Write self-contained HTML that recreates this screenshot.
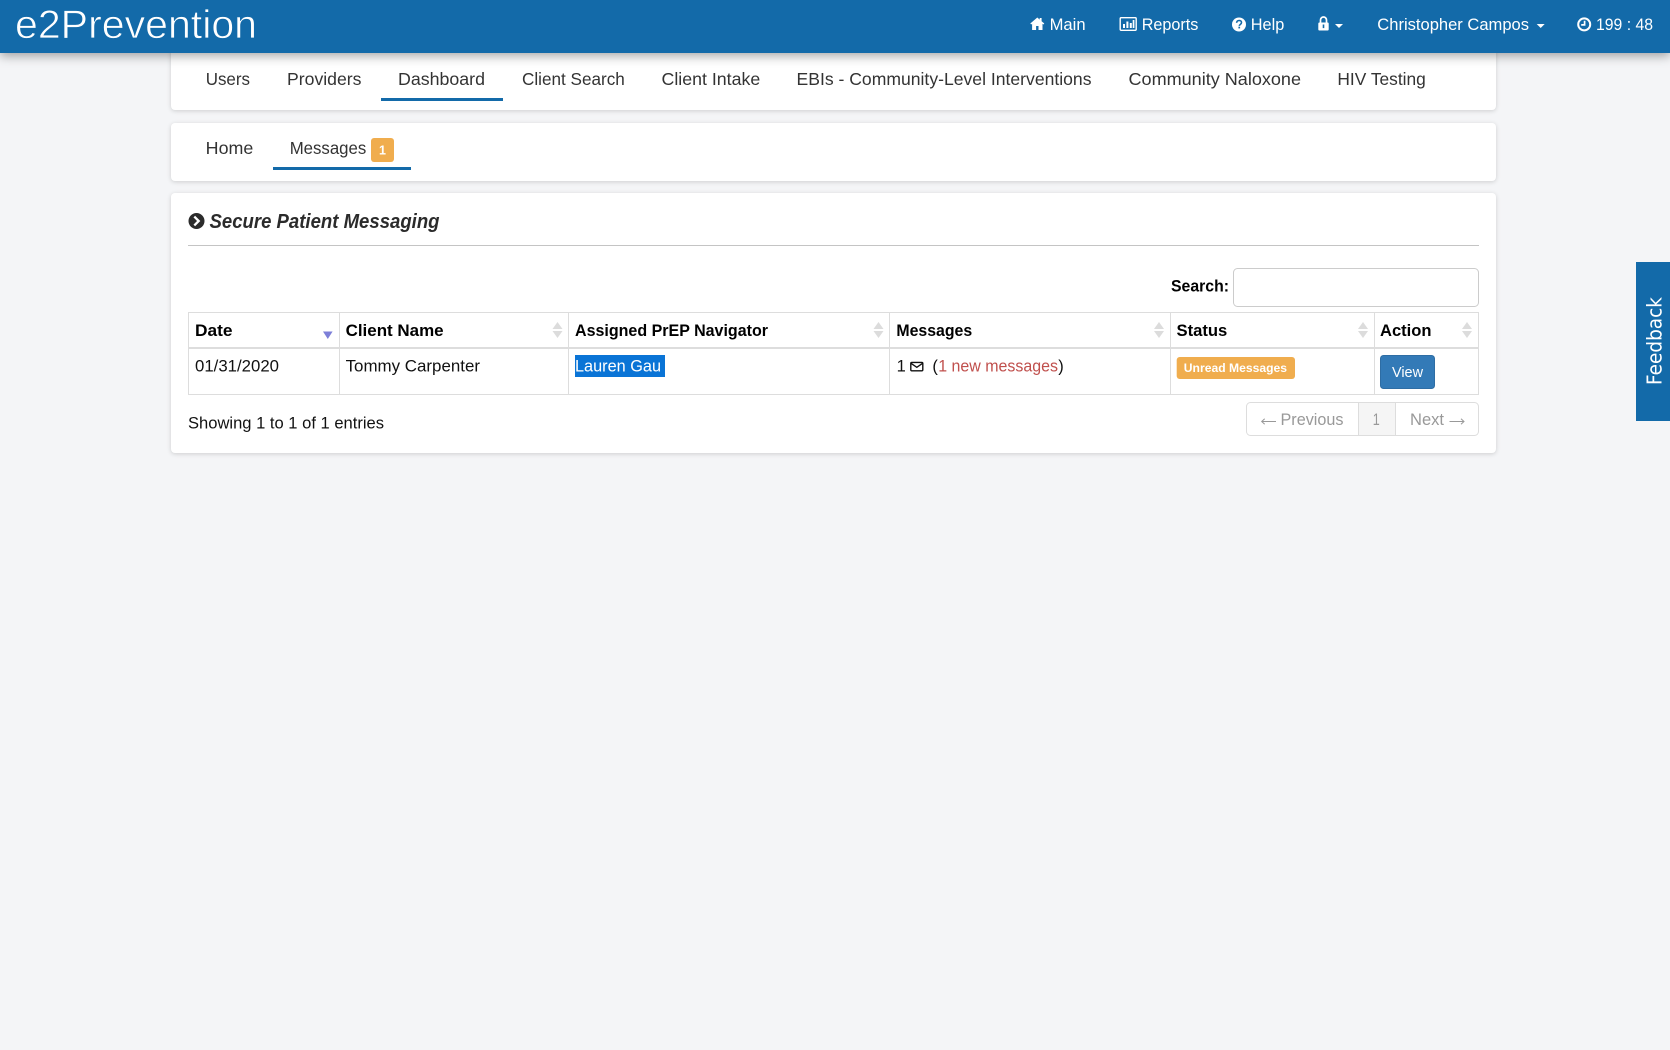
<!DOCTYPE html>
<html lang="en"><head><meta charset="utf-8"><title>e2Prevention</title>
<style>
html,body{margin:0;padding:0;width:1670px;height:1050px;overflow:hidden;background:#f4f5f7}
.card{position:absolute;left:171px;width:1325px;background:#fff;border-radius:4px;box-shadow:0 1px 5px rgba(0,0,0,.16)}
#nav{position:absolute;left:0;top:0;width:1670px;height:53px;background:#136aa9;box-shadow:0 3px 10px rgba(0,0,0,.35)}
#ov{position:absolute;left:0;top:0}
text{font-family:"Liberation Sans",sans-serif;white-space:pre}
.n{font-size:17.5px;fill:#333}
.w{font-size:17px;fill:#fff}
.h{font-size:16.5px;font-weight:700;fill:#000}
.b{font-size:16.5px;fill:#111}
.p{font-size:16.5px;fill:#999}
</style></head><body>
<div class="card" style="top:40px;height:70px"></div>
<div class="card" style="top:123px;height:58px"></div>
<div class="card" style="top:193px;height:260px"></div>
<div id="nav"></div>
<svg id="ov" width="1670" height="1050" viewBox="0 0 1670 1050">
<!-- navbar -->
<text x="15" y="38" font-size="40" fill="#fff" stroke="#136aa9" stroke-width=".7" textLength="242" lengthAdjust="spacingAndGlyphs">e2Prevention</text>
<path d="M1037.3 17.5l-7 6 .9 1 .9-.7v6.2h4v-4h2.4v4h4v-6.2l.9.7.9-1-2.7-2.3v-3.2h-1.9v1.6z" fill="#fff"/>
<text class="w" x="1049.6" y="30" textLength="36" lengthAdjust="spacingAndGlyphs">Main</text>
<rect x="1120.2" y="17.7" width="16" height="12.6" rx="1" fill="none" stroke="#fff" stroke-width="1.4"/>
<path d="M1123 24h2v4h-2zM1126.4 21.5h2V28h-2zM1129.8 23h2v5h-2zM1132.7 20h1.7v8h-1.7z" fill="#fff"/>
<text class="w" x="1141.7" y="30" textLength="56.7" lengthAdjust="spacingAndGlyphs">Reports</text>
<circle cx="1239" cy="24.5" r="7" fill="#fff"/>
<path d="M1236.6 22.8c.2-1.6 1.2-2.3 2.5-2.3 1.4 0 2.4.8 2.4 2 0 1.8-2.1 1.8-2.1 3.4" fill="none" stroke="#136aa9" stroke-width="1.6"/><rect x="1238.4" y="26.7" width="1.7" height="1.7" fill="#136aa9"/>
<text class="w" x="1250.8" y="30" textLength="33.5" lengthAdjust="spacingAndGlyphs">Help</text>
<path d="M1320.5 22.5v-2.5a3 3 0 0 1 6 0v2.5" fill="none" stroke="#fff" stroke-width="1.7"/><rect x="1318.3" y="22.5" width="10.4" height="8" rx="1" fill="#fff"/><rect x="1322.7" y="24.5" width="1.6" height="3.6" fill="#136aa9"/>
<path d="M1335 24h8l-4 4z" fill="#fff"/>
<text class="w" x="1377.3" y="30" textLength="151.7" lengthAdjust="spacingAndGlyphs">Christopher Campos</text>
<path d="M1536.7 24h8l-4 4z" fill="#fff"/>
<circle cx="1584.2" cy="24.4" r="6" fill="none" stroke="#fff" stroke-width="2"/><path d="M1584.6 20.7v4.2h-3.4" fill="none" stroke="#fff" stroke-width="1.7"/>
<text class="w" x="1596" y="30" textLength="57" lengthAdjust="spacingAndGlyphs">199 : 48</text>
<!-- main tabs -->
<text class="n" x="205.7" y="85" textLength="44.3" lengthAdjust="spacingAndGlyphs">Users</text>
<text class="n" x="287" y="85" textLength="74.5" lengthAdjust="spacingAndGlyphs">Providers</text>
<text class="n" x="398" y="85" textLength="87" lengthAdjust="spacingAndGlyphs">Dashboard</text>
<rect x="381" y="98" width="122" height="3" fill="#136aa9"/>
<text class="n" x="522" y="85" textLength="102.8" lengthAdjust="spacingAndGlyphs">Client Search</text>
<text class="n" x="661.5" y="85" textLength="98.7" lengthAdjust="spacingAndGlyphs">Client Intake</text>
<text class="n" x="796.5" y="85" textLength="295" lengthAdjust="spacingAndGlyphs">EBIs - Community-Level Interventions</text>
<text class="n" x="1128.5" y="85" textLength="172.5" lengthAdjust="spacingAndGlyphs">Community Naloxone</text>
<text class="n" x="1337.4" y="85" textLength="88.4" lengthAdjust="spacingAndGlyphs">HIV Testing</text>
<!-- sub tabs -->
<text class="n" x="205.7" y="154" textLength="47.6" lengthAdjust="spacingAndGlyphs">Home</text>
<text class="n" x="289.7" y="154" textLength="76.6" lengthAdjust="spacingAndGlyphs">Messages</text>
<rect x="371" y="138" width="23" height="24" rx="3" fill="#f0ad4e"/>
<text x="382.5" y="154.5" font-size="12.5" font-weight="700" fill="#fff" text-anchor="middle">1</text>
<rect x="273" y="167" width="138" height="3" fill="#136aa9"/>
<!-- title -->
<circle cx="196.5" cy="221" r="8" fill="#2b2b2b"/>
<path d="M194.3 216.6l4.4 4.4-4.4 4.4" fill="none" stroke="#fff" stroke-width="2.3"/>
<text x="209.5" y="228" font-size="20.5" font-weight="700" font-style="italic" fill="#2b2b2b" textLength="230" lengthAdjust="spacingAndGlyphs">Secure Patient Messaging</text>
<rect x="188" y="245" width="1291" height="1" fill="#c4c4c4"/>
<!-- search -->
<text class="h" x="1171" y="291.5" textLength="58" lengthAdjust="spacingAndGlyphs">Search:</text>
<rect x="1233.5" y="268.5" width="245" height="38" rx="4" fill="#fff" stroke="#ccc"/>
<!-- table -->
<g fill="#ddd">
<rect x="188" y="312" width="1291" height="1"/>
<rect x="188" y="347" width="1291" height="2"/>
<rect x="188" y="394" width="1291" height="1"/>
<rect x="188" y="312" width="1" height="83"/>
<rect x="339" y="312" width="1" height="83"/>
<rect x="568" y="312" width="1" height="83"/>
<rect x="889" y="312" width="1" height="83"/>
<rect x="1170" y="312" width="1" height="83"/>
<rect x="1374" y="312" width="1" height="83"/>
<rect x="1478" y="312" width="1" height="83"/>
</g>
<text class="h" x="195" y="336" textLength="37.5" lengthAdjust="spacingAndGlyphs">Date</text>
<text class="h" x="345.6" y="336" textLength="98" lengthAdjust="spacingAndGlyphs">Client Name</text>
<text class="h" x="575" y="336" textLength="193" lengthAdjust="spacingAndGlyphs">Assigned PrEP Navigator</text>
<text class="h" x="896.4" y="336" textLength="75.8" lengthAdjust="spacingAndGlyphs">Messages</text>
<text class="h" x="1176.5" y="336" textLength="50.8" lengthAdjust="spacingAndGlyphs">Status</text>
<text class="h" x="1380" y="336" textLength="51.5" lengthAdjust="spacingAndGlyphs">Action</text>
<path d="M323 331.5h9.6l-4.8 7.5z" fill="#7d7fd8"/>
<g fill="#dcdcdc">
<path d="M552.5 329l5-7 5 7zM552.5 331h10l-5 7z"/>
<path d="M873.5 329l5-7 5 7zM873.5 331h10l-5 7z"/>
<path d="M1154 329l5-7 5 7zM1154 331h10l-5 7z"/>
<path d="M1358 329l5-7 5 7zM1358 331h10l-5 7z"/>
<path d="M1462 329l5-7 5 7zM1462 331h10l-5 7z"/>
</g>
<text class="b" x="195" y="371.5" textLength="84" lengthAdjust="spacingAndGlyphs">01/31/2020</text>
<text class="b" x="345.6" y="371.5" textLength="134.4" lengthAdjust="spacingAndGlyphs">Tommy Carpenter</text>
<rect x="575" y="355" width="90" height="22" fill="#0a74d6"/>
<text x="575" y="371.5" font-size="16.5" fill="#fff" textLength="86" lengthAdjust="spacingAndGlyphs">Lauren Gau</text>
<text class="b" x="896.6" y="371.5" font-size="17">1</text>
<rect x="910.8" y="362.4" width="12" height="8.4" rx="1" fill="none" stroke="#111" stroke-width="1.4"/>
<path d="M911 363.3l5.8 4 5.8-4" fill="none" stroke="#111" stroke-width="1.3"/>
<text class="b" x="932.4" y="371.5">(</text>
<text x="938.2" y="371.5" font-size="16.5" fill="#c0504d" textLength="119.8" lengthAdjust="spacingAndGlyphs">1 new messages</text>
<text class="b" x="1058.2" y="371.5">)</text>
<rect x="1176.7" y="357" width="118.3" height="22" rx="3" fill="#f0ad4e"/>
<text x="1183.8" y="372" font-size="11.5" font-weight="700" fill="#fff" textLength="103.2" lengthAdjust="spacingAndGlyphs">Unread Messages</text>
<rect x="1380.5" y="355.5" width="54" height="33" rx="3" fill="#337ab7" stroke="#2e6da4"/>
<text x="1392" y="377" font-size="14.5" fill="#fff" textLength="31" lengthAdjust="spacingAndGlyphs">View</text>
<text class="b" x="188" y="428.5" textLength="196" lengthAdjust="spacingAndGlyphs">Showing 1 to 1 of 1 entries</text>
<!-- pagination -->
<path d="M1358.5 403h37v32h-37z" fill="#f5f5f5"/>
<rect x="1246.5" y="402.5" width="232" height="33" rx="4" fill="none" stroke="#ddd"/>
<path d="M1358.5 403v32M1395.5 403v32" stroke="#ddd"/>
<path d="M1276 421.5h-14.3m3-2.7l-3 2.7 3 2.7" fill="none" stroke="#999"/>
<text class="p" x="1280.5" y="425" textLength="63" lengthAdjust="spacingAndGlyphs">Previous</text>
<text class="p" x="1372.7" y="425" textLength="7" lengthAdjust="spacingAndGlyphs">1</text>
<text class="p" x="1410" y="425" textLength="34" lengthAdjust="spacingAndGlyphs">Next</text>
<path d="M1449.5 421.5h14.5m-3-2.7l3 2.7-3 2.7" fill="none" stroke="#999"/>
<!-- feedback -->
<rect x="1636" y="262" width="34" height="159" fill="#136aa9"/>
<text transform="translate(1661.5 385) rotate(-90)" font-size="20" fill="#fff" style="font-family:'DejaVu Sans',sans-serif" textLength="88" lengthAdjust="spacingAndGlyphs">Feedback</text>
</svg>
</body></html>
